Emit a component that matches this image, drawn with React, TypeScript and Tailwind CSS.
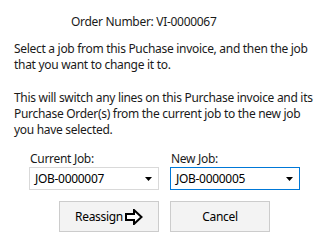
import React from "react";

function Combo({ value, focused }: { value: string; focused?: boolean }) {
  return (
    <div
      className={
        "flex h-[23px] w-[130px] items-center justify-between border bg-white pl-[5px] pr-[5px] " +
        (focused ? "border-[#0078d7]" : "border-[#d9d9d9]")
      }
    >
      <span className="whitespace-nowrap text-[12px] leading-[16px] text-black">{value}</span>
      <svg width="7" height="4" viewBox="0 0 7 4" className="mr-[1px]">
        <path d="M0 0 H7 L3.5 4 Z" fill="#000" />
      </svg>
    </div>
  );
}

function ArrowIcon() {
  return (
    <svg width="18" height="16" viewBox="0 0 18 16" className="ml-[2px]">
      <path
        d="M1 5 H9 V1 L16.5 8 L9 15 V11 H1 Z"
        fill="#fff"
        stroke="#000"
        strokeWidth="2"
        strokeLinejoin="miter"
      />
    </svg>
  );
}

export default function App() {
  return (
    <div
      className="h-[244px] w-[328px] overflow-hidden whitespace-nowrap bg-white text-[12px] leading-[16px] tracking-[-0.3px] text-[#1a1a1a]"
      style={{ fontFamily: '"Noto Sans", "Open Sans", sans-serif' }}
    >
      <div className="pl-[71px] pt-[14px]">Order Number: VI-0000067</div>
      <div className="mt-[11px] px-[14px]">
        Select a job from this Puchase invoice, and then the job
        <br />
        that you want to change it to.
      </div>
      <div className="mt-[17px] px-[14px]">
        This will switch any lines on this Purchase invoice and its
        <br />
        Purchase Order(s) from the current job to the new job
        <br />
        you have selected.
      </div>
      <div className="ml-[29px] mt-[13px] grid w-[271px] grid-cols-[130px_130px] gap-x-[11px]">
        <div className="pl-[1px]">Current Job:</div>
        <div className="pl-[1px]">New Job:</div>
        <Combo value="JOB-0000007" />
        <Combo value="JOB-0000005" focused />
        <div className="mt-[11px] flex justify-end">
          <button className="flex h-[31px] w-[100px] items-center justify-center border border-[#cccccc] bg-[#f3f3f3] text-[12px] text-black">
            <span>Reassign</span>
            <ArrowIcon />
          </button>
        </div>
        <div className="mt-[11px] flex justify-start">
          <button className="flex h-[31px] w-[100px] items-center justify-center border border-[#cccccc] bg-[#f3f3f3] text-[12px] text-black">
            Cancel
          </button>
        </div>
      </div>
    </div>
  );
}
